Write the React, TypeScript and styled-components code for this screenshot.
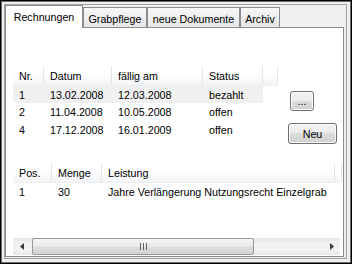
import React from 'react';
import styled, { createGlobalStyle } from 'styled-components';

const Global = createGlobalStyle`
  html, body { margin: 0; padding: 0; background: #ffffff; }
  body {
    font-family: "Liberation Sans", Arial, sans-serif;
    font-size: 10.7px;
    color: #000;
  }
  * { box-sizing: border-box; }
`;

const Window = styled.div`
  width: 352px;
  height: 264px;
  background: #f0f0f0;
  border: 1px solid #000;
  box-shadow: inset 0 0 0 1px #6a6a6a;
  padding: 3px 4px 4px 3px;
`;

const Frame = styled.div`
  height: 100%;
  border: 1px solid #a0a0a0;
  display: flex;
  flex-direction: column;
`;

const TabStrip = styled.div`
  display: flex;
  align-items: flex-end;
  height: 22px;
  flex: none;
`;

const Tab = styled.div<{ $active?: boolean; $w: number }>`
  width: ${p => p.$w}px;
  height: ${p => (p.$active ? 23 : 20)}px;
  margin-bottom: ${p => (p.$active ? -1 : 0)}px;
  position: relative;
  z-index: ${p => (p.$active ? 1 : 0)};
  border: 1px solid #898c95;
  border-bottom: none;
  background: ${p => (p.$active ? '#ffffff' : 'linear-gradient(#f7f7f7, #e6e6e6)')};
  display: flex;
  align-items: center;
  justify-content: center;
  padding-top: ${p => (p.$active ? 0 : 2)}px;
  white-space: nowrap;
`;

const Panel = styled.div`
  flex: 1;
  margin: 0 2px 1px 0;
  background: #fff;
  border: 1px solid #898c95;
  padding: 38px 0 0 7px;
  display: flex;
  flex-direction: column;
`;

const TopRow = styled.div`
  display: flex;
  align-items: flex-start;
`;

const List = styled.div<{ $w: number; $h?: number }>`
  width: ${p => p.$w}px;
  ${p => (p.$h ? `height: ${p.$h}px;` : '')}
  display: flex;
  flex-direction: column;
`;

const HeaderRow = styled.div<{ $cols: string }>`
  display: grid;
  grid-template-columns: ${p => p.$cols};
  height: 20px;
  background: linear-gradient(#ffffff 0%, #ffffff 40%, #f3f4f6 100%);
  border-bottom: 1px solid #eceef1;
`;

const HeaderCell = styled.div`
  display: flex;
  align-items: center;
  padding-left: 6px;
  border-right: 1px solid #e3e5e8;
  white-space: nowrap;
  overflow: hidden;
`;

const Row = styled.div<{ $cols: string }>`
  display: grid;
  grid-template-columns: ${p => p.$cols};
  height: 17px;
  margin-bottom: 0.5px;
`;

const Cell = styled.div<{ $sel?: boolean }>`
  display: flex;
  align-items: center;
  padding-left: 6px;
  white-space: nowrap;
  background: ${p => (p.$sel ? '#f0f0f0' : 'transparent')};
`;

const ButtonCol = styled.div`
  display: flex;
  flex-direction: column;
  align-items: flex-start;
  padding-top: 25px;
  margin-left: 12px;
  gap: 12px;
`;

const Button = styled.button<{ $w: number; $h: number; $shift?: number }>`
  width: ${p => p.$w}px;
  height: ${p => p.$h}px;
  margin-left: ${p => p.$shift || 0}px;
  font-family: "Liberation Sans", Arial, sans-serif;
  font-size: 10.7px;
  color: #000;
  border: 1px solid #707070;
  border-radius: 3px;
  background: linear-gradient(#f2f2f2 0%, #ebebeb 49%, #dddddd 50%, #cfcfcf 100%);
  box-shadow: inset 0 0 0 1px #fcfcfc;
  padding: 0;
  display: flex;
  align-items: center;
  justify-content: center;
`;

const BottomList = styled(List)`
  margin-top: 19px;
`;

const Filler = styled.div`
  flex: 1;
`;

const Scrollbar = styled.div`
  height: 17px;
  display: flex;
  align-items: stretch;
  background: linear-gradient(#e6e6e6, #f2f2f2 30%, #f2f2f2 70%, #e9e9e9);
`;

const ArrowBtn = styled.div`
  width: 17px;
  display: flex;
  align-items: center;
  justify-content: center;
  flex: none;
`;

const Thumb = styled.div<{ $w: number }>`
  width: ${p => p.$w}px;
  margin: 0 0 0 2px;
  border: 1px solid #999999;
  border-radius: 2px;
  background: linear-gradient(#f4f4f4 0%, #e9e9e9 50%, #dcdcdc 51%, #d4d4d4 100%);
  display: flex;
  align-items: center;
  justify-content: center;
  flex: none;
`;

const Track = styled.div`
  flex: 1;
`;

const topCols = '31px 68px 91px 60px 15px';
const botCols = '39px 50px 233px 5px';

const rows = [
  ['1', '13.02.2008', '12.03.2008', 'bezahlt'],
  ['2', '11.04.2008', '10.05.2008', 'offen'],
  ['4', '17.12.2008', '16.01.2009', 'offen'],
];

export default function App() {
  return (
    <>
      <Global />
      <Window>
        <Frame>
          <TabStrip>
            <Tab $active $w={78}>Rechnungen</Tab>
            <Tab $w={64}>Grabpflege</Tab>
            <Tab $w={93}>neue Dokumente</Tab>
            <Tab $w={40}>Archiv</Tab>
          </TabStrip>
          <Panel>
            <TopRow>
              <List $w={265}>
                <HeaderRow $cols={topCols}>
                  <HeaderCell>Nr.</HeaderCell>
                  <HeaderCell>Datum</HeaderCell>
                  <HeaderCell>fällig am</HeaderCell>
                  <HeaderCell>Status</HeaderCell>
                  <HeaderCell />
                </HeaderRow>
                {rows.map((r, i) => (
                  <Row key={i} $cols={topCols}>
                    {r.map((c, j) => (
                      <Cell key={j} $sel={i === 0}>{c}</Cell>
                    ))}
                    <Cell />
                  </Row>
                ))}
              </List>
              <ButtonCol>
                <Button $w={24} $h={20}>...</Button>
                <Button $w={49} $h={21} $shift={-2}>Neu</Button>
              </ButtonCol>
            </TopRow>
            <BottomList $w={327} $h={92}>
              <HeaderRow $cols={botCols}>
                <HeaderCell>Pos.</HeaderCell>
                <HeaderCell>Menge</HeaderCell>
                <HeaderCell>Leistung</HeaderCell>
                <HeaderCell />
              </HeaderRow>
              <Row $cols={botCols}>
                <Cell>1</Cell>
                <Cell>30</Cell>
                <Cell>Jahre Verlängerung Nutzungsrecht Einzelgrab</Cell>
                <Cell />
              </Row>
              <Filler />
              <Scrollbar>
                <ArrowBtn>
                  <svg width="4" height="7" viewBox="0 0 4 7">
                    <path d="M4 0 L0 3.5 L4 7 Z" fill="#3c3c3c" />
                  </svg>
                </ArrowBtn>
                <Thumb $w={222}>
                  <svg width="7" height="7" viewBox="0 0 7 7">
                    <rect x="0" y="0" width="1" height="7" fill="#5f5f5f" />
                    <rect x="3" y="0" width="1" height="7" fill="#5f5f5f" />
                    <rect x="6" y="0" width="1" height="7" fill="#5f5f5f" />
                  </svg>
                </Thumb>
                <Track />
                <ArrowBtn>
                  <svg width="4" height="7" viewBox="0 0 4 7">
                    <path d="M0 0 L4 3.5 L0 7 Z" fill="#3c3c3c" />
                  </svg>
                </ArrowBtn>
              </Scrollbar>
            </BottomList>
          </Panel>
        </Frame>
      </Window>
    </>
  );
}
